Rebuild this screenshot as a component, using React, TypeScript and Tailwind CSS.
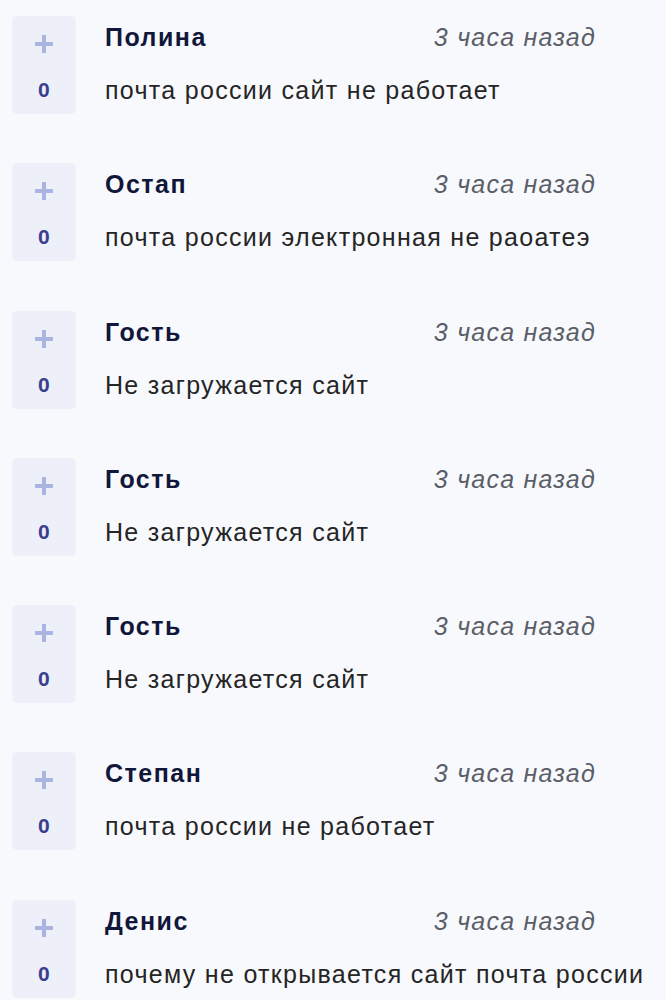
import React from "react";

const items = [
  { name: "Полина", text: "почта россии сайт не работает" },
  { name: "Остап", text: "почта россии электронная не раоатеэ" },
  { name: "Гость", text: "Не загружается сайт" },
  { name: "Гость", text: "Не загружается сайт" },
  { name: "Гость", text: "Не загружается сайт" },
  { name: "Степан", text: "почта россии не работает" },
  { name: "Денис", text: "почему не открывается сайт почта россии" },
];

function Row({ name, text }: { name: string; text: string }) {
  return (
    <div className="flex h-[98px]">
      <div className="w-[64px] h-[98px] shrink-0 rounded-[5px] bg-[#edf0f9] flex flex-col items-center">
        <svg width="20" height="20" viewBox="0 0 20 20" className="mt-[18px]">
          <rect x="8" y="1" width="4" height="18" fill="#aab4e2" />
          <rect x="1" y="8" width="18" height="4" fill="#aab4e2" />
        </svg>
        <div className="mt-[26px] text-[21px] leading-[20px] font-bold text-[#3b3d8e] tracking-[0.5px]">0</div>
      </div>
      <div className="ml-[29px] w-[491px] flex flex-col">
        <div className="mt-[9px] flex items-baseline justify-between">
          <span className="text-[25px] leading-[25px] font-bold text-[#11173a] tracking-[1.5px]">{name}</span>
          <span className="text-[25px] leading-[25px] italic text-[#5a5e68] tracking-[1.25px]">3 часа назад</span>
        </div>
        <div className="mt-[28px] text-[25px] leading-[25px] text-[#252525] tracking-[1.3px] whitespace-nowrap">{text}</div>
      </div>
    </div>
  );
}

export default function App() {
  return (
    <div
      className="w-[666px] h-[1000px] bg-[#f8f9fc] overflow-hidden pl-[12px] pt-[16px] flex flex-col gap-[49.3px]"
      style={{ fontFamily: '"Liberation Sans", Arial, sans-serif' }}
    >
      {items.map((it, i) => (
        <Row key={i} name={it.name} text={it.text} />
      ))}
    </div>
  );
}
